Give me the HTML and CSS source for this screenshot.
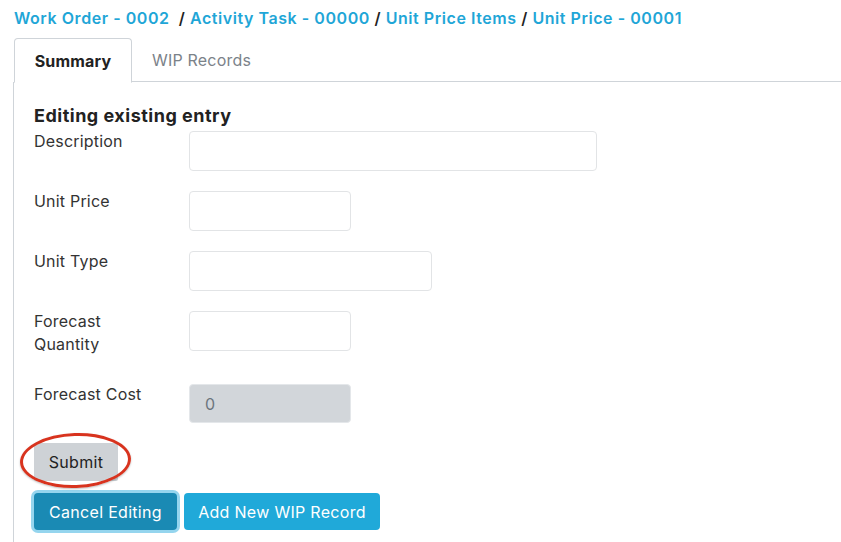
FILE: index.html
```
<!DOCTYPE html>
<html>
<head>
<meta charset="utf-8">
<link rel="stylesheet" href="styles.css">
</head>
<body>
<nav class="crumbs">
  <a href="#">Work Order - 0002</a>&nbsp;&nbsp;<span class="sep">/</span> <a href="#">Activity Task - 00000</a> <span class="sep">/</span> <a href="#">Unit Price Items</a> <span class="sep">/</span> <a href="#">Unit Price - 00001</a>
</nav>
<ul class="tabs">
  <li class="tab active">Summary</li>
  <li class="tab">WIP Records</li>
</ul>
<section class="panel">
  <h2 class="title">Editing existing entry</h2>
  <div class="row">
    <label class="lbl">Description</label>
    <input class="inp w-desc" type="text">
  </div>
  <div class="row">
    <label class="lbl">Unit Price</label>
    <input class="inp w-sm" type="text">
  </div>
  <div class="row">
    <label class="lbl">Unit Type</label>
    <input class="inp w-md" type="text">
  </div>
  <div class="row">
    <label class="lbl">Forecast<br>Quantity</label>
    <input class="inp w-sm" type="text">
  </div>
  <div class="row">
    <label class="lbl">Forecast Cost</label>
    <input class="inp w-sm disabled" type="text" value="0" disabled>
  </div>
  <div class="submit-wrap">
    <button class="btn btn-gray">Submit</button>
    <span class="ring"></span>
  </div>
  <div class="actions">
    <button class="btn btn-dark">Cancel Editing</button>
    <button class="btn btn-blue">Add New WIP Record</button>
  </div>
</section>
</body>
</html>
```
FILE: styles.css
```
* { box-sizing: border-box; }
html, body { margin: 0; padding: 0; background: #fff; }
body {
  font-family: Inter, "Open Sans", "Liberation Sans", sans-serif;
  color: #2b2b2b;
  font-size: 16px;
  letter-spacing: 0.2px;
  width: 841px;
  height: 542px;
  overflow: hidden;
}
.crumbs {
  padding: 6px 0 0 14px;
  height: 38px;
  line-height: 24px;
  font-size: 16px;
  font-weight: 600;
  letter-spacing: 0.55px;
  white-space: nowrap;
}
.crumbs a { color: #1fa6d7; text-decoration: none; }
.crumbs .sep { color: #222; }
.tabs {
  list-style: none;
  margin: 0 0 0 14px;
  padding: 0;
  display: flex;
  height: 44px;
  border-bottom: 1px solid #cfd4d9;
}
.tab {
  padding: 0 20px;
  line-height: 44px;
  height: 44px;
  color: #7b8289;
  font-size: 16px;
}
.tab.active {
  width: 118px;
  text-align: center;
  padding: 0;
  color: #222;
  font-weight: 700;
  border: 1px solid #cfd4d9;
  border-bottom: 1px solid #fff;
  border-radius: 4px 4px 0 0;
  background: #fff;
  height: 45px;
  line-height: 44px;
}
.panel {
  margin-left: 13px;
  border-left: 1px solid #cfd4d9;
  padding: 22px 0 0 20px;
  height: 460px;
}
.title {
  margin: 0 0 3px 0;
  font-size: 18px;
  font-weight: 700;
  line-height: 24px;
  letter-spacing: 0.5px;
  color: #222;
}
.row {
  display: flex;
  align-items: flex-start;
  margin-bottom: 20px;
}
.lbl {
  width: 155px;
  line-height: 23px;
  margin-bottom: 8px;
  color: #333;
  flex: none;
  margin-top: -1px;
}
.inp {
  height: 40px;
  border: 1px solid #e2e4e6;
  border-radius: 4px;
  background: #fff;
  font: inherit;
  padding: 0 15px;
  color: #6c757d;
}
.w-desc { width: 408px; }
.w-sm { width: 162px; }
.w-md { width: 243px; }
.inp.disabled {
  background: #d2d6da;
  border-color: #e4e7ea;
  height: 39px;
}
.submit-wrap {
  position: relative;
  display: inline-block;
  margin-bottom: 12px;
}
.btn {
  font: inherit;
  font-size: 16px;
  letter-spacing: 0.3px;
  border: none;
  border-radius: 4px;
  cursor: pointer;
}
.btn-gray {
  width: 84px;
  height: 38px;
  background: #ced2d6;
  color: #222;
  border-radius: 2px;
}
.ring {
  position: absolute;
  left: -14px;
  right: -13px;
  top: -10px;
  bottom: -7px;
  border: 3px solid #d8331e;
  border-radius: 50%;
  transform: rotate(-2deg);
  box-shadow: 0 1px 2px rgba(0,0,0,0.25);
}
.actions {
  display: flex;
  gap: 7px;
}
.btn-dark {
  width: 143px;
  height: 37px;
  background: #1a8ab4;
  color: #fff;
  box-shadow: 0 0 0 3px #95d5ee;
}
.btn-blue {
  width: 196px;
  height: 37px;
  background: #20a9d9;
  color: #fff;
}
```
